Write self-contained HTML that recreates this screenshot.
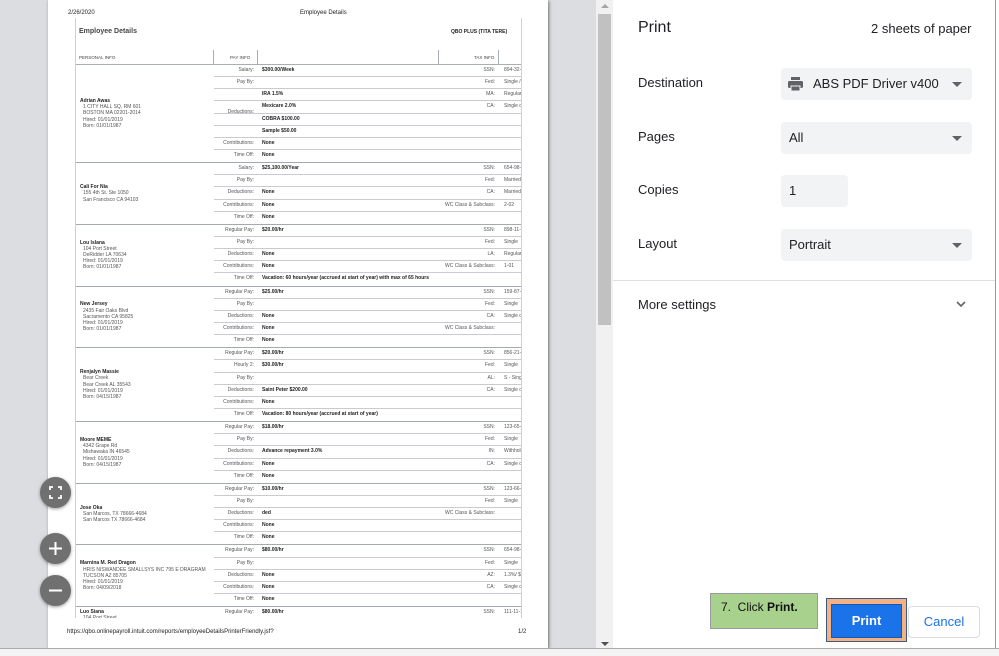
<!DOCTYPE html>
<html><head><meta charset="utf-8"><style>
*{margin:0;padding:0;box-sizing:border-box}
body{width:999px;height:656px;overflow:hidden;background:#dcdde0;font-family:"Liberation Sans",sans-serif;position:relative}
.page{position:absolute;left:48px;top:0;width:500px;height:648px;background:#fff;box-shadow:1px 1px 3px rgba(0,0,0,.5)}
.t{position:absolute;font-size:6px;color:#222;white-space:nowrap}
.rep{position:absolute;left:27px;top:18px;width:447px;height:600px;border-left:1px solid #c9cdf0;border-right:1px solid #c9cdf0;overflow:hidden;font-size:5px;color:#444}
.hdr{position:absolute;left:0;top:32px;width:447px;height:15px;border-bottom:1px solid #a9adb8}
.blks{position:absolute;left:0;top:47px;width:447px}
.blk{display:flex;border-bottom:1px solid #a5a9b3}
.pi{width:138px;padding-left:4px;display:flex;flex-direction:column;justify-content:center;line-height:6.2px;color:#555}
.pi b{color:#222;font-size:5px}
.pi span{padding-left:3px}
.rows{width:309px}
.r{height:12.15px;border-bottom:1px solid #c8cbd2;position:relative;line-height:11.5px;white-space:nowrap}
.r:last-child{border-bottom:none}
.l{position:absolute;left:0;width:40px;text-align:right;color:#555}
.v{position:absolute;left:48px;font-weight:bold;color:#222}
.tl{position:absolute;left:160px;width:121px;text-align:right;color:#555}
.tv{position:absolute;left:290px;width:19px;overflow:hidden;color:#555}
.panel{position:absolute;left:613px;top:0;width:382px;height:648px;background:#fff}
.pt{position:absolute;font-size:13px;color:#202124;white-space:nowrap}
.sel{position:absolute;left:168px;width:191px;height:32px;background:#f1f3f4;border-radius:4px;font-size:13px;color:#202124;line-height:32px;padding-left:8px}
.arr{position:absolute;right:10px;top:14px;width:0;height:0;border-left:5px solid transparent;border-right:5px solid transparent;border-top:5px solid #5f6368}
.fab{position:absolute;left:40px;width:31px;height:31px;border-radius:50%;background:#707070;box-shadow:0 1px 3px rgba(0,0,0,.4);color:#fff;text-align:center}
</style></head><body>
<div class="page">
<div class="t" style="left:20px;top:10px">2/26/2020</div>
<div class="t" style="left:252px;top:10px">Employee Details</div>
<div class="rep">
<div class="t" style="left:3px;top:10px;font-size:7px;font-weight:bold;color:#444">Employee Details</div>
<div class="t" style="left:375px;top:11px;font-size:5px;font-weight:bold">QBO PLUS (TITA TERE)</div>
<div class="hdr">
<div class="t" style="left:3px;top:5px;font-size:4.5px;color:#444">PERSONAL INFO</div>
<div style="position:absolute;left:137px;top:0;height:15px;border-left:1px solid #a9adb8"></div>
<div class="t" style="left:154px;top:5px;font-size:4.5px;color:#444">PAY INFO</div>
<div style="position:absolute;left:181px;top:0;height:15px;border-left:1px solid #a9adb8"></div>
<div style="position:absolute;left:362px;top:0;height:15px;border-left:1px solid #a9adb8"></div>
<div class="t" style="left:398px;top:5px;font-size:4.5px;color:#444">TAX INFO</div>
<div style="position:absolute;left:422px;top:0;height:15px;border-left:1px solid #a9adb8"></div>
</div>
<div class="blks">
<div class="blk"><div class="pi"><b>Adrian Awas</b><span>1 CITY HALL SQ, RM 601</span><span>BOSTON MA 02201-2014</span><span>Hired: 01/01/2019</span><span>Born: 01/01/1987</span></div><div class="rows">
<div class="r"><span class="l">Salary:</span><span class="v">$300.00/Week</span><span class="tl">SSN:</span><span class="tv">894-32-1</span></div>
<div class="r"><span class="l">Pay By:</span><span class="tl">Fed:</span><span class="tv">Single / 3</span></div>
<div class="r"><span class="v">IRA 1.5%</span><span class="tl">MA:</span><span class="tv">Regular/</span></div>
<div class="r"><span class="l" style="top:6px">Deductions:</span><span class="v">Mexicare 2.0%</span><span class="tl">CA:</span><span class="tv">Single or</span></div>
<div class="r"><span class="v">COBRA $100.00</span></div>
<div class="r"><span class="v">Sample $50.00</span></div>
<div class="r"><span class="l">Contributions:</span><span class="v">None</span></div>
<div class="r"><span class="l">Time Off:</span><span class="v">None</span></div></div></div>
<div class="blk"><div class="pi"><b>Cali For Nia</b><span>155 4th St. Ste 1050</span><span>San Francisco CA 94103</span></div><div class="rows">
<div class="r"><span class="l">Salary:</span><span class="v">$25,100.00/Year</span><span class="tl">SSN:</span><span class="tv">654-98-7</span></div>
<div class="r"><span class="l">Pay By:</span><span class="tl">Fed:</span><span class="tv">Married /</span></div>
<div class="r"><span class="l">Deductions:</span><span class="v">None</span><span class="tl">CA:</span><span class="tv">Married j</span></div>
<div class="r"><span class="l">Contributions:</span><span class="v">None</span><span class="tl">WC Class &amp; Subclass:</span><span class="tv">2-02</span></div>
<div class="r"><span class="l">Time Off:</span><span class="v">None</span></div></div></div>
<div class="blk"><div class="pi"><b>Lou Islana</b><span>104 Port Street</span><span>DeRidder LA 70634</span><span>Hired: 01/01/2019</span><span>Born: 01/01/1987</span></div><div class="rows">
<div class="r"><span class="l">Regular Pay:</span><span class="v">$20.00/hr</span><span class="tl">SSN:</span><span class="tv">898-11-1</span></div>
<div class="r"><span class="l">Pay By:</span><span class="tl">Fed:</span><span class="tv">Single</span></div>
<div class="r"><span class="l">Deductions:</span><span class="v">None</span><span class="tl">LA:</span><span class="tv">Regular/</span></div>
<div class="r"><span class="l">Contributions:</span><span class="v">None</span><span class="tl">WC Class &amp; Subclass:</span><span class="tv">1-01</span></div>
<div class="r"><span class="l">Time Off:</span><span class="v">Vacation: 60 hours/year (accrued at start of year) with max of 65 hours</span></div></div></div>
<div class="blk"><div class="pi"><b>New Jersey</b><span>2435 Fair Oaks Blvd</span><span>Sacramento CA 95825</span><span>Hired: 01/01/2019</span><span>Born: 01/01/1987</span></div><div class="rows">
<div class="r"><span class="l">Regular Pay:</span><span class="v">$25.00/hr</span><span class="tl">SSN:</span><span class="tv">159-87-4</span></div>
<div class="r"><span class="l">Pay By:</span><span class="tl">Fed:</span><span class="tv">Single</span></div>
<div class="r"><span class="l">Deductions:</span><span class="v">None</span><span class="tl">CA:</span><span class="tv">Single or</span></div>
<div class="r"><span class="l">Contributions:</span><span class="v">None</span><span class="tl">WC Class &amp; Subclass:</span></div>
<div class="r"><span class="l">Time Off:</span><span class="v">None</span></div></div></div>
<div class="blk"><div class="pi"><b>Renjalyn Massie</b><span>Bear Creek</span><span>Bear Creek AL 35543</span><span>Hired: 01/01/2019</span><span>Born: 04/15/1987</span></div><div class="rows">
<div class="r"><span class="l">Regular Pay:</span><span class="v">$20.00/hr</span><span class="tl">SSN:</span><span class="tv">856-21-1</span></div>
<div class="r"><span class="l">Hourly 2:</span><span class="v">$30.00/hr</span><span class="tl">Fed:</span><span class="tv">Single</span></div>
<div class="r"><span class="l">Pay By:</span><span class="tl">AL:</span><span class="tv">S - Single</span></div>
<div class="r"><span class="l">Deductions:</span><span class="v">Saint Peter $200.00</span><span class="tl">CA:</span><span class="tv">Single or</span></div>
<div class="r"><span class="l">Contributions:</span><span class="v">None</span></div>
<div class="r"><span class="l">Time Off:</span><span class="v">Vacation: 80 hours/year (accrued at start of year)</span></div></div></div>
<div class="blk"><div class="pi"><b>Moore MEME</b><span>4342 Grape Rd</span><span>Mishawaka IN 46545</span><span>Hired: 01/01/2019</span><span>Born: 04/15/1987</span></div><div class="rows">
<div class="r"><span class="l">Regular Pay:</span><span class="v">$18.00/hr</span><span class="tl">SSN:</span><span class="tv">123-65-4</span></div>
<div class="r"><span class="l">Pay By:</span><span class="tl">Fed:</span><span class="tv">Single</span></div>
<div class="r"><span class="l">Deductions:</span><span class="v">Advance repayment 3.0%</span><span class="tl">IN:</span><span class="tv">Withhold</span></div>
<div class="r"><span class="l">Contributions:</span><span class="v">None</span><span class="tl">CA:</span><span class="tv">Single or</span></div>
<div class="r"><span class="l">Time Off:</span><span class="v">None</span></div></div></div>
<div class="blk"><div class="pi"><b>Jose Oka</b><span>San Marcos, TX 78666-4684</span><span>San Marcos TX 78666-4684</span></div><div class="rows">
<div class="r"><span class="l">Regular Pay:</span><span class="v">$10.00/hr</span><span class="tl">SSN:</span><span class="tv">123-66-5</span></div>
<div class="r"><span class="l">Pay By:</span><span class="tl">Fed:</span><span class="tv">Single</span></div>
<div class="r"><span class="l">Deductions:</span><span class="v">ded</span><span class="tl">WC Class &amp; Subclass:</span></div>
<div class="r"><span class="l">Contributions:</span><span class="v">None</span></div>
<div class="r"><span class="l">Time Off:</span><span class="v">None</span></div></div></div>
<div class="blk"><div class="pi"><b>Marnina M. Red Dragon</b><span>HRIS NISWANDEE SMALLSYS INC 795 E DRAGRAM</span><span>TUCSON AZ 85705</span><span>Hired: 01/01/2019</span><span>Born: 04/09/2018</span></div><div class="rows">
<div class="r"><span class="l">Regular Pay:</span><span class="v">$80.00/hr</span><span class="tl">SSN:</span><span class="tv">654-98-7</span></div>
<div class="r"><span class="l">Pay By:</span><span class="tl">Fed:</span><span class="tv">Single</span></div>
<div class="r"><span class="l">Deductions:</span><span class="v">None</span><span class="tl">AZ:</span><span class="tv">1.3%/ $2</span></div>
<div class="r"><span class="l">Contributions:</span><span class="v">None</span><span class="tl">CA:</span><span class="tv">Single or</span></div>
<div class="r"><span class="l">Time Off:</span><span class="v">None</span></div></div></div>
<div class="blk" style="border:none"><div class="pi" style="justify-content:flex-start;padding-top:2px"><b>Luo Siana</b><span>104 Port Street</span></div><div class="rows">
<div class="r"><span class="l">Regular Pay:</span><span class="v">$80.00/hr</span><span class="tl">SSN:</span><span class="tv">111-11-1</span></div>
<div class="r"></div></div></div>
</div></div>
<div class="t" style="left:19px;top:629px;font-size:6px">https://qbo.onlinepayroll.intuit.com/reports/employeeDetailsPrinterFriendly.jsf?</div>
<div class="t" style="left:470px;top:629px;font-size:6px">1/2</div>
</div>
<div class="fab" style="top:477px"><svg width="31" height="31" viewBox="0 0 31 31" fill="none" stroke="#fff" stroke-width="1.8"><path d="M10 13V10h3M18 10h3v3M21 18v3h-3M13 21h-3v-3"/></svg></div>
<div class="fab" style="top:533px"><svg width="31" height="31" viewBox="0 0 31 31" stroke="#fff" stroke-width="2"><path d="M9 15.5h13M15.5 9v13"/></svg></div>
<div class="fab" style="top:575px"><svg width="31" height="31" viewBox="0 0 31 31" stroke="#fff" stroke-width="2"><path d="M9 15.5h13"/></svg></div>
<div style="position:absolute;left:596px;top:0;width:17px;height:648px;background:#f1f1f1"></div>
<div style="position:absolute;left:598px;top:14px;width:13px;height:311px;background:#c1c1c1"></div>
<div style="position:absolute;left:601px;top:4px;border-left:4px solid transparent;border-right:4px solid transparent;border-bottom:4px solid #a3a3a3"></div>
<div style="position:absolute;left:601px;top:642px;border-left:4px solid transparent;border-right:4px solid transparent;border-top:4px solid #505050"></div>
<div class="panel">
<div class="pt" style="left:25px;top:19px;font-size:16px">Print</div>
<div class="pt" style="left:258px;top:21px;font-size:13px">2 sheets of paper</div>
<div class="pt" style="left:25px;top:75px">Destination</div>
<div class="sel" style="top:68px;padding-left:32px"><svg style="position:absolute;left:6px;top:8px" width="17" height="16" viewBox="0 0 17 16"><rect x="4" y="1" width="9" height="3" fill="#5f6368"/><rect x="1" y="5" width="15" height="7" rx="1.5" fill="#5f6368"/><rect x="4" y="10" width="9" height="5" fill="#5f6368" stroke="#f1f3f4" stroke-width="1"/></svg>ABS PDF Driver v400<div class="arr"></div></div>
<div class="pt" style="left:25px;top:129px">Pages</div>
<div class="sel" style="top:122px">All<div class="arr"></div></div>
<div class="pt" style="left:25px;top:182px">Copies</div>
<div class="sel" style="top:175px;width:67px">1</div>
<div class="pt" style="left:25px;top:236px">Layout</div>
<div class="sel" style="top:229px">Portrait<div class="arr"></div></div>
<div style="position:absolute;left:0;top:280px;width:382px;border-top:1px solid #e0e0e0"></div>
<div class="pt" style="left:25px;top:297px">More settings</div>
<svg style="position:absolute;left:342px;top:300px" width="12" height="8" viewBox="0 0 12 8"><path d="M2 2l4 4 4-4" stroke="#5f6368" stroke-width="1.6" fill="none"/></svg>
<div style="position:absolute;left:97px;top:593px;width:108px;height:36px;background:#a9d18e;border:1px solid #9a9a9a;font-size:12px;color:#111;padding:6px 0 0 10px;font-family:'Liberation Sans',sans-serif">7.&nbsp; Click <b>Print.</b></div>
<div style="position:absolute;left:213px;top:598px;width:81px;height:44px;background:#f4b183;border:1px solid #3a5a80"></div>
<div style="position:absolute;left:218px;top:604px;width:71px;height:34px;background:#1a73e8;border:1px solid #1558b0;color:#fff;font-size:13px;font-weight:bold;text-align:center;line-height:32px">Print</div>
<div style="position:absolute;left:295px;top:606px;width:72px;height:32px;border:1px solid #dadce0;border-radius:4px;color:#1a73e8;font-size:13px;text-align:center;line-height:30px">Cancel</div>
</div>
<div style="position:absolute;left:995px;top:0;width:4px;height:656px;background:#fff;border-left:1px solid #999"></div>
<div style="position:absolute;left:0;top:648px;width:999px;height:8px;background:#f4f4f4;border-top:1px solid #aaa"></div>
</body></html>
